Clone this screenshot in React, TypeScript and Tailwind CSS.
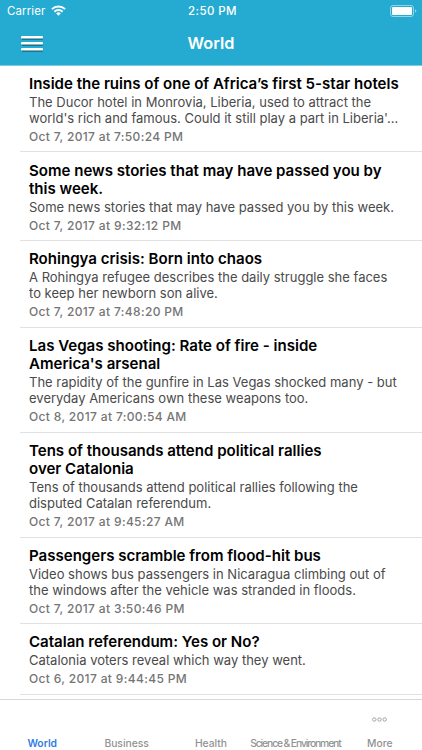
import React from 'react';

interface Story {
  title: string[];
  summary: string[];
  date: string;
  height: string;
}

const stories: Story[] = [
  {
    title: ['Inside the ruins of one of Africa’s first 5-star hotels'],
    summary: [
      'The Ducor hotel in Monrovia, Liberia, used to attract the',
      "world's rich and famous. Could it still play a part in Liberia'...",
    ],
    date: 'Oct 7, 2017 at 7:50:24 PM',
    height: 'h-[86px] pt-[9px]',
  },
  {
    title: ['Some news stories that may have passed you by', 'this week.'],
    summary: ['Some news stories that may have passed you by this week.'],
    date: 'Oct 7, 2017 at 9:32:12 PM',
    height: 'h-[89px] pt-[10px]',
  },
  {
    title: ['Rohingya crisis: Born into chaos'],
    summary: ['A Rohingya refugee describes the daily struggle she faces', 'to keep her newborn son alive.'],
    date: 'Oct 7, 2017 at 7:48:20 PM',
    height: 'h-[87px] pt-[9px]',
  },
  {
    title: ['Las Vegas shooting: Rate of fire - inside', "America's arsenal"],
    summary: ['The rapidity of the gunfire in Las Vegas shocked many - but', 'everyday Americans own these weapons too.'],
    date: 'Oct 8, 2017 at 7:00:54 AM',
    height: 'h-[105px] pt-[9px]',
  },
  {
    title: ['Tens of thousands attend political rallies', 'over Catalonia'],
    summary: ['Tens of thousands attend political rallies following the', 'disputed Catalan referendum.'],
    date: 'Oct 7, 2017 at 9:45:27 AM',
    height: 'h-[105px] pt-[9px]',
  },
  {
    title: ['Passengers scramble from flood-hit bus'],
    summary: ['Video shows bus passengers in Nicaragua climbing out of', 'the windows after the vehicle was stranded in floods.'],
    date: 'Oct 7, 2017 at 3:50:46 PM',
    height: 'h-[86px] pt-[9px]',
  },
  {
    title: ['Catalan referendum: Yes or No?'],
    summary: ['Catalonia voters reveal which way they went.'],
    date: 'Oct 6, 2017 at 9:44:45 PM',
    height: 'h-[71px] pt-[9px]',
  },
];

function StatusBar() {
  return (
    <div className="h-[22px] grid grid-cols-3 items-center pl-[7px] pr-[5px] text-[11.5px] leading-[22px]">
      <div className="flex items-center gap-[6px]">
        <span className="tracking-[0.1px]">Carrier</span>
        <svg className="-mt-[2px]" width="15" height="11" viewBox="0 0 15 11" fill="none" stroke="white" strokeWidth="2">
          <path d="M0.9 4.1a9.4 9.4 0 0 1 13.2 0" />
          <path d="M3.4 6.7a5.9 5.9 0 0 1 8.2 0" />
          <path d="M7.5 10.7L5.2 8.4a3.3 3.3 0 0 1 4.6 0z" fill="white" stroke="none" />
        </svg>
      </div>
      <span className="pl-[1px] text-center font-medium tracking-[0.4px] whitespace-nowrap">2:50 PM</span>
      <svg className="justify-self-end -mt-[1px]" width="27" height="12" viewBox="0 0 27 12">
        <rect x="0.5" y="0.5" width="23" height="11" rx="2.5" fill="none" stroke="white" strokeOpacity="0.5" />
        <rect x="2" y="2" width="20" height="8" rx="1" fill="white" />
        <path d="M25 4.2v3.6c1.8-.6 1.8-3 0-3.6z" fill="white" fillOpacity="0.5" />
      </svg>
    </div>
  );
}

function Header() {
  return (
    <header className="h-[66px] shrink-0 bg-[#25abd1] text-white border-b border-[#7ecde3]">
      <StatusBar />
      <div className="h-[43px] grid grid-cols-3 items-center px-[20px]">
        <svg width="24" height="18" viewBox="0 0 24 18">
          {[1, 7, 13].map((y) => (
            <g key={y}>
              <rect x="1.5" y={y + 1} width="21.5" height="2.8" rx="1.2" fill="#16667d" />
              <rect x="1" y={y} width="22" height="2.6" rx="1.2" fill="white" />
            </g>
          ))}
        </svg>
        <h1 className="text-center text-[16.3px] font-semibold">World</h1>
      </div>
    </header>
  );
}

function StoryRow({ story }: { story: Story }) {
  return (
    <li className={`${story.height} ml-[20px] pl-[9px] border-b border-[#e2e2e4] whitespace-nowrap`}>
      <h2 className="text-[15.05px] leading-[18px] font-semibold text-black">
        {story.title.map((line) => (
          <span key={line} className="block">{line}</span>
        ))}
      </h2>
      <p className="mt-[1px] text-[13px] leading-[16px] text-[#4a4a4a]">
        {story.summary.map((line) => (
          <span key={line} className="block">{line}</span>
        ))}
      </p>
      <p className="mt-[3px] text-[12px] leading-[16px] font-medium tracking-[0.35px] text-[#757575]">{story.date}</p>
    </li>
  );
}

function TabBar() {
  return (
    <nav className="h-[51px] shrink-0 mt-[4px] border-t border-[#d8d8da] grid grid-cols-5 items-end text-center text-[10.3px] leading-[13px] font-medium text-[#929292] whitespace-nowrap">
      <span className="text-[#2f7de1] font-semibold">World</span>
      <span>Business</span>
      <span>Health</span>
      <span className="tracking-[-1.1px] flex justify-center">Science &amp; Environment</span>
      <span className="flex flex-col items-center">
        <svg className="mb-[15px]" width="15" height="5" viewBox="0 0 15 5" fill="none" stroke="#a3a3a3">
          <circle cx="2.3" cy="2.5" r="1.7" />
          <circle cx="7.5" cy="2.5" r="1.7" />
          <circle cx="12.7" cy="2.5" r="1.7" />
        </svg>
        More
      </span>
    </nav>
  );
}

export default function App() {
  return (
    <div className="w-[422px] h-[750px] flex flex-col overflow-hidden bg-white font-['Inter',sans-serif]">
      <Header />
      <ul className="shrink-0">
        {stories.map((story) => (
          <StoryRow key={story.date} story={story} />
        ))}
      </ul>
      <TabBar />
    </div>
  );
}
